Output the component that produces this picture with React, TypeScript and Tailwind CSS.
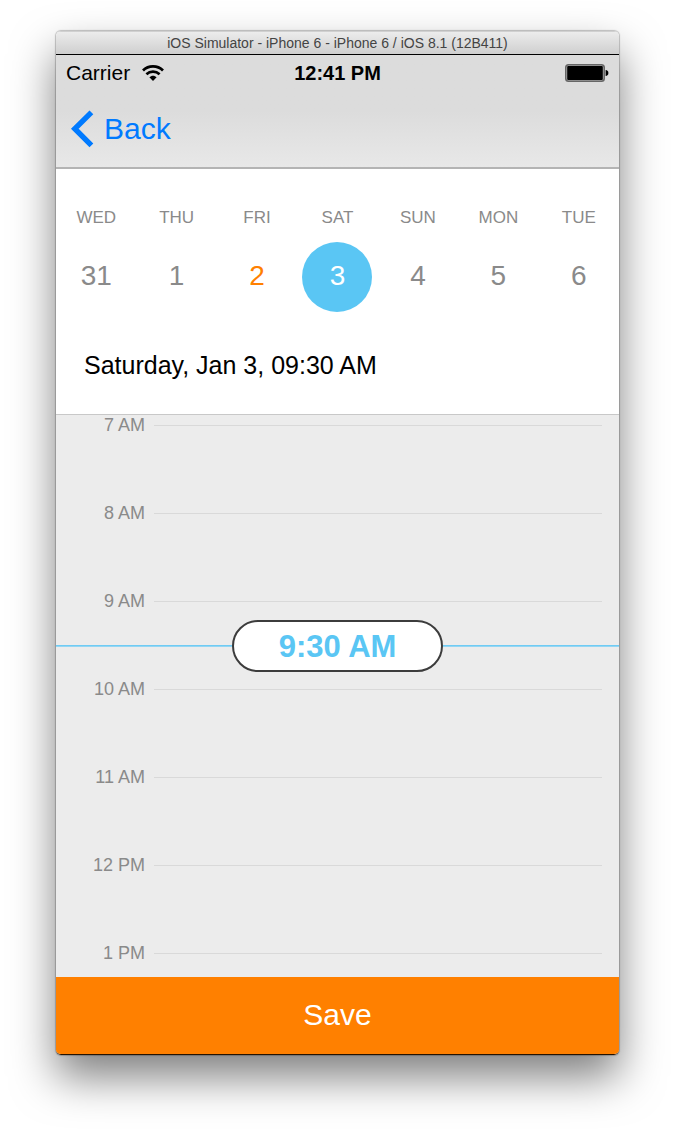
const days = [
  { name: 'WED', date: 31, tone: 'text-[#8a8a8a]' },
  { name: 'THU', date: 1, tone: 'text-[#8a8a8a]' },
  { name: 'FRI', date: 2, tone: 'text-[#ff8000]' },
  { name: 'SAT', date: 3, tone: 'bg-[#5ac6f4] text-white', selected: true },
  { name: 'SUN', date: 4, tone: 'text-[#8a8a8a]' },
  { name: 'MON', date: 5, tone: 'text-[#8a8a8a]' },
  { name: 'TUE', date: 6, tone: 'text-[#8a8a8a]' },
];

const hours = ['7 AM', '8 AM', '9 AM', '10 AM', '11 AM', '12 PM', '1 PM'];

function WifiIcon() {
  return (
    <svg width="22" height="16" viewBox="0 0 22 16" fill="none" stroke="#000" aria-hidden="true">
      <path d="M1 5.4C6.6.1 15.4.1 21 5.4" strokeWidth="2.8" />
      <path d="M4.4 9.2c3.8-3.4 9.4-3.4 13.2 0" strokeWidth="2.7" />
      <path d="M7.4 12.3c2-2.1 5.2-2.1 7.2 0L11 16z" fill="#000" stroke="none" />
    </svg>
  );
}

function BatteryIcon() {
  return (
    <svg width="44" height="18" viewBox="0 0 44 18" aria-hidden="true">
      <rect x="0.75" y="0.75" width="38.5" height="16.5" rx="2.8" fill="#b5b5b5" stroke="#666" strokeWidth="1.5" />
      <rect x="2.2" y="2" width="35.6" height="14" rx="1" fill="#000" />
      <path d="M40.6 6c1.9.1 2.8 1.4 2.8 3s-.9 2.9-2.8 3z" fill="#000" />
    </svg>
  );
}

function StatusBar() {
  return (
    <div className="grid grid-cols-3 items-center px-2.5 pt-[7px]">
      <div className="flex items-center gap-3 text-[21px] leading-[22px]">
        Carrier
        <WifiIcon />
      </div>
      <div className="text-center text-[20px] leading-[22px] font-bold">12:41 PM</div>
      <div className="flex justify-end">
        <BatteryIcon />
      </div>
    </div>
  );
}

export default function App() {
  return (
    <div
      className="bg-white px-14 pt-[31px] pb-20 text-black"
      style={{ fontFamily: '"Liberation Sans", Arial, sans-serif' }}
    >
      <div className="overflow-clip rounded-[5px] border-b border-[#261300] shadow-[0_0_1px_1px_rgba(0,0,0,0.22),0_22px_44px_rgba(0,0,0,0.5)]">
        <div className="border-t border-b border-t-[#d0d0d0] border-b-black bg-linear-to-b from-[#ececec] to-[#cfcfcf] pt-px text-center text-[14px] leading-[21px] text-[#444]">
          iOS Simulator - iPhone 6 - iPhone 6 / iOS 8.1 (12B411)
        </div>

        <header className="border-b-2 border-[#b4b4b4] bg-linear-to-b from-[#dcdcdc] from-50% to-[#e8e8e8]">
          <StatusBar />
          <nav className="px-3.5 pt-6 pb-[17px]">
            <button type="button" className="flex items-center gap-2.5 text-[30px] leading-[42px] text-[#007aff]">
              <svg width="24" height="38" viewBox="0 0 24 38" fill="none" stroke="#007aff" strokeWidth="5.4" aria-hidden="true">
                <path d="M21.4 2.4 4.8 18.7l16.6 16.6" />
              </svg>
              Back
            </button>
          </nav>
        </header>

        <section className="border-b border-[#c8c8c8] bg-white pt-[38px] pb-[33px]">
          <div className="grid grid-cols-7">
            {days.map((day) => (
              <button
                key={day.name}
                type="button"
                aria-pressed={Boolean(day.selected)}
                className="flex flex-col items-center gap-3.5 text-[#8a8a8a]"
              >
                <span className="text-[17px] leading-[21px]">{day.name}</span>
                <span className={`flex size-[70px] items-center justify-center rounded-full pb-0.5 text-[28px] leading-8 ${day.tone}`}>
                  {day.date}
                </span>
              </button>
            ))}
          </div>
          <p className="mt-[37px] px-7 text-[25px] leading-8">Saturday, Jan 3, 09:30 AM</p>
        </section>

        <main className="relative bg-[#ececec] pr-[17px] pb-3.5">
          <ul className="flex flex-col gap-[68px]">
            {hours.map((hour) => (
              <li key={hour} className="flex items-center gap-[9px]">
                <span className="w-[89px] pt-px text-right text-[18px] leading-[19px] text-[#8a8a8a]">{hour}</span>
                <span className="h-px flex-1 bg-[#d9d9d9]" />
              </li>
            ))}
          </ul>
          <div className="absolute inset-x-0 top-[205px] flex items-center">
            <span className="h-0.5 flex-1 bg-linear-to-b from-[#5ac6f4] to-[#a5dbf2]" />
            <button
              type="button"
              className="h-[52px] w-[211px] rounded-full border-2 border-[#3c3c3c] bg-white pt-0.5 text-[31px] leading-8 font-bold text-[#5ac6f4]"
            >
              9:30 AM
            </button>
            <span className="h-0.5 flex-1 bg-linear-to-b from-[#5ac6f4] to-[#a5dbf2]" />
          </div>
        </main>

        <button type="button" className="block w-full bg-[#ff8000] pt-5 pb-[21px] text-center text-[30px] leading-9 text-white">
          Save
        </button>
      </div>
    </div>
  );
}
